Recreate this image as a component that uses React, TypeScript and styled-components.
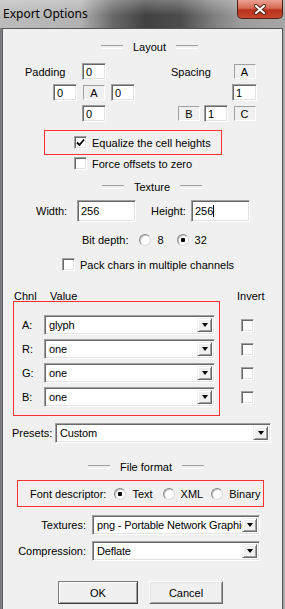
import React from "react";
import styled, { createGlobalStyle, css } from "styled-components";

const GlobalStyle = createGlobalStyle`
  html, body {
    margin: 0;
    padding: 0;
    background: #8c8c8c;
  }
  body {
    font-family: "Liberation Sans", Arial, sans-serif;
    font-size: 11px;
    color: #000;
  }
  * {
    box-sizing: border-box;
  }
`;

// red annotation frame used around the highlighted groups
const redFrame = css`
  border: 1px solid #ff3030;
`;

const Window = styled.div`
  width: 285px;
  height: 609px;
  display: flex;
  flex-direction: column;
  overflow: hidden;
  background: linear-gradient(to right, #6e7078 0px, #8a8a8a 2px, #9c9c9c 50%, #a9a9a9 100%);
`;

const TitleBar = styled.div`
  height: 28px;
  flex: none;
  display: flex;
  align-items: flex-start;
  justify-content: space-between;
  background:
    linear-gradient(to bottom, rgba(255, 255, 255, 0.28), rgba(255, 255, 255, 0) 55%),
    linear-gradient(
      to right,
      #bcbcbc 0px,
      #b2b2b2 80px,
      #6a6a6a 112px,
      #414141 145px,
      #4c4c4c 180px,
      #7c7c7c 212px,
      #9c9c9c 240px,
      #a6a6a6 285px
    );
`;

const Title = styled.span`
  font-family: "Noto Sans", "Liberation Sans", sans-serif;
  font-size: 12px;
  padding: 5px 0 0 3px;
  color: #000;
`;

const CloseButton = styled.div`
  width: 46px;
  height: 19px;
  margin-right: 2px;
  border: 1px solid #51221a;
  border-top: none;
  border-radius: 0 0 5px 5px;
  background: linear-gradient(to bottom, #e9a193 0%, #d76b55 45%, #b8301a 56%, #c9482e 100%);
  display: flex;
  align-items: center;
  justify-content: center;
`;

const Client = styled.div`
  flex: 1;
  margin: 0 2px;
  border: 1px solid #565656;
  border-bottom: none;
  background: #f0f0f0;
  display: flex;
  flex-direction: column;
`;

const SectionHeader = styled.div<{ $top: number; $shift: number }>`
  display: flex;
  align-items: center;
  justify-content: center;
  gap: 10px;
  height: 14px;
  margin-top: ${(p) => p.$top}px;
  padding-left: ${(p) => p.$shift}px;
  &::before,
  &::after {
    content: "";
    width: 22px;
    height: 2px;
    border-top: 1px solid #a0a0a0;
    border-bottom: 1px solid #fff;
  }
`;

const LayoutRow = styled.div`
  display: flex;
  margin-top: 9px;
`;

const PaddingGrid = styled.div`
  display: grid;
  grid-template-columns: 23px 24px 24px 24px;
  grid-template-rows: 17px 17px 17px;
  column-gap: 5px;
  row-gap: 4px;
  margin-left: 22px;
`;

const SpacingGrid = styled.div`
  display: grid;
  grid-template-columns: 22px 24px 25px;
  grid-template-rows: 17px 17px 17px;
  column-gap: 4px;
  row-gap: 4px;
  margin-left: 43px;
`;

const Cell = styled.div<{ $c: string; $r: number; $shift?: number }>`
  grid-column: ${(p) => p.$c};
  grid-row: ${(p) => p.$r};
  display: flex;
  align-items: center;
  justify-content: ${(p) => (p.$shift === undefined ? "center" : "flex-start")};
  margin-left: ${(p) => p.$shift ?? 0}px;
  white-space: nowrap;
`;

const Field = styled.div<{ $w?: number }>`
  width: ${(p) => (p.$w ? `${p.$w}px` : "100%")};
  height: 100%;
  background: #fff;
  border: 1px solid;
  border-color: #a0a0a0 #fff #fff #a0a0a0;
  box-shadow: inset 1px 1px 0 #696969, inset -1px -1px 0 #e3e3e3;
  padding: 0 3px;
  display: flex;
  align-items: center;
  white-space: nowrap;
`;

const Caret = styled.span`
  width: 1px;
  height: 12px;
  background: #000;
`;

const StaticBox = styled.div`
  width: 22px;
  height: 15px;
  border: 1px solid;
  border-color: #a0a0a0 #fff #fff #a0a0a0;
  display: flex;
  align-items: center;
  justify-content: center;
`;

const RedBox = styled.div<{ $left: number; $w: number; $h: number; $top: number; $pad: number }>`
  ${redFrame}
  margin-top: ${(p) => p.$top}px;
  margin-left: ${(p) => p.$left}px;
  width: ${(p) => p.$w}px;
  height: ${(p) => p.$h}px;
  padding-left: ${(p) => p.$pad}px;
  display: flex;
  align-items: center;
  white-space: nowrap;
`;

const CheckRow = styled.label<{ $top: number; $left: number }>`
  display: flex;
  align-items: center;
  gap: 5px;
  height: 13px;
  margin-top: ${(p) => p.$top}px;
  margin-left: ${(p) => p.$left}px;
  white-space: nowrap;
`;

const CheckBox = styled.span`
  width: 13px;
  height: 13px;
  flex: none;
  background: #fff;
  border: 1px solid;
  border-color: #a0a0a0 #fff #fff #a0a0a0;
  box-shadow: inset 1px 1px 0 #696969, inset -1px -1px 0 #e3e3e3;
  display: flex;
  align-items: center;
  justify-content: center;
`;

const Radio = styled.span<{ $on?: boolean }>`
  width: 12px;
  height: 12px;
  flex: none;
  border-radius: 50%;
  border: 1px solid;
  border-color: #8a8a8a #dcdcdc #dcdcdc #8a8a8a;
  background: ${(p) =>
    p.$on ? "radial-gradient(circle, #000 0 2px, #fff 2.5px)" : "#fff"};
  box-shadow: inset 1px 1px 0 #c4c4c4;
`;

const RadioOption = styled.span<{ $gap: number }>`
  display: flex;
  align-items: center;
  flex: none;
  gap: 6px;
  margin-left: ${(p) => p.$gap}px;
`;

const TextureRow = styled.div`
  display: flex;
  align-items: center;
  height: 22px;
  margin-top: 6px;
  margin-left: 33px;
`;

const FieldLabel = styled.span<{ $w: number; $right?: boolean }>`
  width: ${(p) => p.$w}px;
  flex: none;
  text-align: ${(p) => (p.$right ? "right" : "left")};
  padding-right: ${(p) => (p.$right ? 6 : 0)}px;
  white-space: nowrap;
`;

const Spacer = styled.span<{ $w: number }>`
  width: ${(p) => p.$w}px;
  flex: none;
`;

const BitRow = styled.div`
  display: flex;
  align-items: center;
  height: 12px;
  margin-top: 12px;
  margin-left: 79px;
  white-space: nowrap;
`;

const ChannelHead = styled.div`
  display: flex;
  height: 11px;
  line-height: 13px;
  margin-top: 19px;
  margin-left: 11px;
`;

const HeadText = styled.span<{ $w: number }>`
  width: ${(p) => p.$w}px;
  flex: none;
`;

const ChannelArea = styled.div`
  display: flex;
  align-items: flex-start;
  margin-left: 10px;
`;

const ChannelBox = styled.div`
  ${redFrame}
  width: 207px;
  padding: 13px 4px 8px 8px;
  display: flex;
  flex-direction: column;
  gap: 4px;
`;

const ChannelRow = styled.div`
  display: flex;
  align-items: center;
  height: 20px;
`;

const InvertColumn = styled.div`
  display: flex;
  flex-direction: column;
  gap: 4px;
  padding-top: 14px;
  margin-left: 21px;
`;

const InvertSlot = styled.div`
  height: 20px;
  display: flex;
  align-items: center;
`;

const Combo = styled.div<{ $w: number }>`
  width: ${(p) => p.$w}px;
  height: 100%;
  flex: none;
  display: flex;
  align-items: stretch;
  background: #fff;
  border: 1px solid;
  border-color: #a0a0a0 #fff #fff #a0a0a0;
  box-shadow: inset 1px 1px 0 #696969, inset -1px -1px 0 #e3e3e3;
  padding: 2px;
`;

const ComboText = styled.span`
  flex: 1;
  min-width: 0;
  overflow: hidden;
  white-space: nowrap;
  padding-left: 2px;
  display: flex;
  align-items: center;
  font-size: 11px;
  letter-spacing: -0.15px;
`;

const ComboArrow = styled.span`
  width: 15px;
  flex: none;
  background: #f0f0f0;
  border: 1px solid;
  border-color: #f0f0f0 #696969 #696969 #f0f0f0;
  box-shadow: inset 1px 1px 0 #fff, inset -1px -1px 0 #a0a0a0;
  display: flex;
  align-items: center;
  justify-content: center;
  &::after {
    content: "";
    border-left: 3.5px solid transparent;
    border-right: 3.5px solid transparent;
    border-top: 4px solid #000;
  }
`;

const FormRow = styled.div<{ $top: number; $left: number; $h: number }>`
  display: flex;
  align-items: center;
  height: ${(p) => p.$h}px;
  margin-top: ${(p) => p.$top}px;
  margin-left: ${(p) => p.$left}px;
`;

const Button = styled.button<{ $w: number; $gap: number; $default?: boolean }>`
  width: ${(p) => p.$w}px;
  height: 23px;
  margin-left: ${(p) => p.$gap}px;
  padding: 0;
  font: inherit;
  color: #000;
  background: #f0f0f0;
  border: 1px solid;
  border-color: ${(p) =>
    p.$default ? "#7a7a7a #404040 #404040 #7a7a7a" : "#fff #696969 #696969 #fff"};
  box-shadow: ${(p) =>
    p.$default
      ? "inset 1px 1px 0 #fff, inset -1px -1px 0 #a0a0a0"
      : "inset 1px 1px 0 #e3e3e3, inset -1px -1px 0 #a0a0a0"};
`;

const channels = [
  { key: "A", value: "glyph" },
  { key: "R", value: "one" },
  { key: "G", value: "one" },
  { key: "B", value: "one" },
];

const Tick = () => (
  <svg width="9" height="9" viewBox="0 0 9 9">
    <path d="M1 4.5 L3.5 7 L8 1.5" fill="none" stroke="#000" strokeWidth="1.8" />
  </svg>
);

export default function App() {
  return (
    <>
      <GlobalStyle />
      <Window>
        <TitleBar>
          <Title>Export Options</Title>
          <CloseButton>
            <svg width="14" height="11" viewBox="0 0 14 11">
              <path d="M3 2 L11 9 M11 2 L3 9" stroke="#4a1a12" strokeWidth="4" strokeLinecap="round" />
              <path d="M3 2 L11 9 M11 2 L3 9" stroke="#fff" strokeWidth="2.2" strokeLinecap="round" />
            </svg>
          </CloseButton>
        </TitleBar>
        <Client>
          <SectionHeader $top={11} $shift={14}>Layout</SectionHeader>
          <LayoutRow>
            <PaddingGrid>
              <Cell $c="1 / 3" $r={1} $shift={0}>Padding</Cell>
              <Cell $c="3" $r={1}><Field>0</Field></Cell>
              <Cell $c="2" $r={2}><Field>0</Field></Cell>
              <Cell $c="3" $r={2}><StaticBox>A</StaticBox></Cell>
              <Cell $c="4" $r={2}><Field>0</Field></Cell>
              <Cell $c="3" $r={3}><Field>0</Field></Cell>
            </PaddingGrid>
            <SpacingGrid>
              <Cell $c="1 / 3" $r={1} $shift={-7}>Spacing</Cell>
              <Cell $c="3" $r={1}><StaticBox>A</StaticBox></Cell>
              <Cell $c="3" $r={2}><Field>1</Field></Cell>
              <Cell $c="1" $r={3}><StaticBox>B</StaticBox></Cell>
              <Cell $c="2" $r={3}><Field>1</Field></Cell>
              <Cell $c="3" $r={3}><StaticBox>C</StaticBox></Cell>
            </SpacingGrid>
          </LayoutRow>

          <RedBox $top={8} $left={41} $w={178} $h={25} $pad={29}>
            <CheckRow $top={0} $left={0}>
              <CheckBox><Tick /></CheckBox>
              Equalize the cell heights
            </CheckRow>
          </RedBox>
          <CheckRow $top={2} $left={71}>
            <CheckBox />
            Force offsets to zero
          </CheckRow>

          <SectionHeader $top={10} $shift={19}>Texture</SectionHeader>
          <TextureRow>
            <FieldLabel $w={41}>Width:</FieldLabel>
            <Field $w={59}>256</Field>
            <Spacer $w={15} />
            <FieldLabel $w={40}>Height:</FieldLabel>
            <Field $w={59}>256<Caret /></Field>
          </TextureRow>
          <BitRow>
            Bit depth:
            <RadioOption $gap={11}><Radio />8</RadioOption>
            <RadioOption $gap={13}><Radio $on />32</RadioOption>
          </BitRow>
          <CheckRow $top={12} $left={59}>
            <CheckBox />
            Pack chars in multiple channels
          </CheckRow>

          <ChannelHead>
            <HeadText $w={36}>Chnl</HeadText>
            <HeadText $w={187}>Value</HeadText>
            <HeadText $w={30}>Invert</HeadText>
          </ChannelHead>
          <ChannelArea>
            <ChannelBox>
              {channels.map((ch) => (
                <ChannelRow key={ch.key}>
                  <FieldLabel $w={22}>{ch.key}:</FieldLabel>
                  <Combo $w={171}>
                    <ComboText>{ch.value}</ComboText>
                    <ComboArrow />
                  </Combo>
                </ChannelRow>
              ))}
            </ChannelBox>
            <InvertColumn>
              {channels.map((ch) => (
                <InvertSlot key={ch.key}>
                  <CheckBox />
                </InvertSlot>
              ))}
            </InvertColumn>
          </ChannelArea>

          <FormRow $top={7} $left={9} $h={20}>
            <FieldLabel $w={43}>Presets:</FieldLabel>
            <Combo $w={216}>
              <ComboText>Custom</ComboText>
              <ComboArrow />
            </Combo>
          </FormRow>

          <SectionHeader $top={17} $shift={7}>File format</SectionHeader>
          <RedBox $top={6} $left={14} $w={247} $h={27} $pad={12}>
            Font descriptor:
            <RadioOption $gap={8}><Radio $on />Text</RadioOption>
            <RadioOption $gap={10}><Radio />XML</RadioOption>
            <RadioOption $gap={8}><Radio />Binary</RadioOption>
          </RedBox>

          <FormRow $top={8} $left={0} $h={20}>
            <FieldLabel $w={89} $right>Textures:</FieldLabel>
            <Combo $w={168}>
              <ComboText>png - Portable Network Graphics</ComboText>
              <ComboArrow />
            </Combo>
          </FormRow>
          <FormRow $top={6} $left={0} $h={20}>
            <FieldLabel $w={89} $right>Compression:</FieldLabel>
            <Combo $w={168}>
              <ComboText>Deflate</ComboText>
              <ComboArrow />
            </Combo>
          </FormRow>

          <FormRow $top={20} $left={55} $h={23}>
            <Button $w={80} $gap={0} $default>OK</Button>
            <Button $w={74} $gap={11}>Cancel</Button>
          </FormRow>
        </Client>
      </Window>
    </>
  );
}
